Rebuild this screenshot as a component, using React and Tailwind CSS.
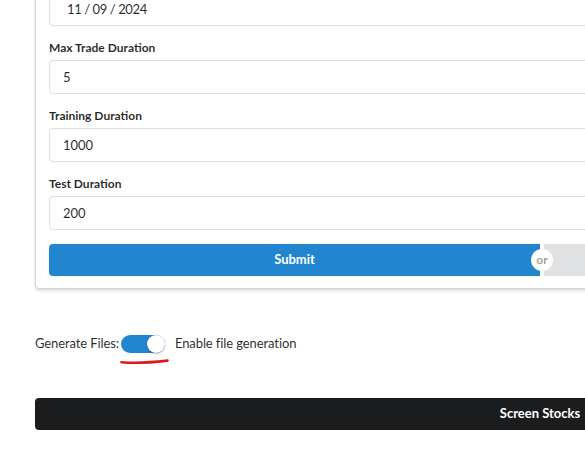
const font = "font-['Lato','Noto_Sans',sans-serif]"

function Field({ label, value }) {
  return (
    <div className="mt-[14px]">
      <label className="block text-[12px] font-bold leading-4 mb-1 text-black/85">{label}</label>
      <input
        readOnly
        value={value}
        className="block w-full h-[34px] px-[13px] text-[13px] text-black/85 border border-[#dededf] rounded-[4px] bg-white outline-none"
      />
    </div>
  )
}

export default function App() {
  return (
    <div className={`w-screen h-screen overflow-hidden bg-white ${font}`}>
      <div className="ml-[35px]">
        {/* form card, scrolled so the top is out of view */}
        <div className="w-[1014px] -mt-[23px] border border-[#d4d4d5] rounded-[4px] bg-white pt-[14px] px-[13px] pb-[12px] shadow-[0_2px_3px_rgba(34,36,38,0.15)]">
          <input
            readOnly
            value="11 / 09 / 2024"
            className="block w-full h-[34px] pl-[17px] text-[13px] tracking-[-0.4px] text-black/85 border border-[#dededf] rounded-[4px] bg-white outline-none"
          />
          <Field label="Max Trade Duration" value="5" />
          <Field label="Training Duration" value="1000" />
          <Field label="Test Duration" value="200" />

          <div className="mt-[14px] flex h-[32px]">
            <button className="flex-1 rounded-l-[4px] bg-[#2185d0] text-white text-[13px] font-bold">Submit</button>
            <div className="relative w-[4px]">
              <span className="absolute left-1/2 top-1/2 -translate-x-1/2 -translate-y-1/2 w-[22px] h-[22px] rounded-full bg-white text-black/40 text-[12px] font-bold leading-[22px] text-center z-10">or</span>
            </div>
            <button className="flex-1 rounded-r-[4px] bg-[#e0e1e2]" />
          </div>
        </div>

        <div className="mt-[45px] h-[20px] flex items-center text-[13px] tracking-[-0.1px] text-black/85">
          <span>Generate Files:</span>
          <div className="ml-[2px] w-[44px] h-[18px] rounded-full bg-[#2185d0] flex items-center justify-end">
            <div className="w-[18px] h-[18px] rounded-full bg-white shadow-[0_1px_2px_rgba(0,0,0,0.3)]" />
          </div>
          <span className="ml-[10px]">Enable file generation</span>
        </div>

        <svg className="block ml-[85px] mt-[4px]" width="50" height="7" viewBox="0 0 50 7">
          <path d="M1.5 4.2 C 12 5.2, 30 4.6, 47.5 2.6" fill="none" stroke="#e3161d" strokeWidth="2.6" strokeLinecap="round" />
        </svg>

        <button className="block mt-[33px] w-[1010px] h-[32px] rounded-[4px] bg-[#1b1c1d] text-white text-[13px] font-bold">
          Screen Stocks
        </button>
      </div>
    </div>
  )
}
